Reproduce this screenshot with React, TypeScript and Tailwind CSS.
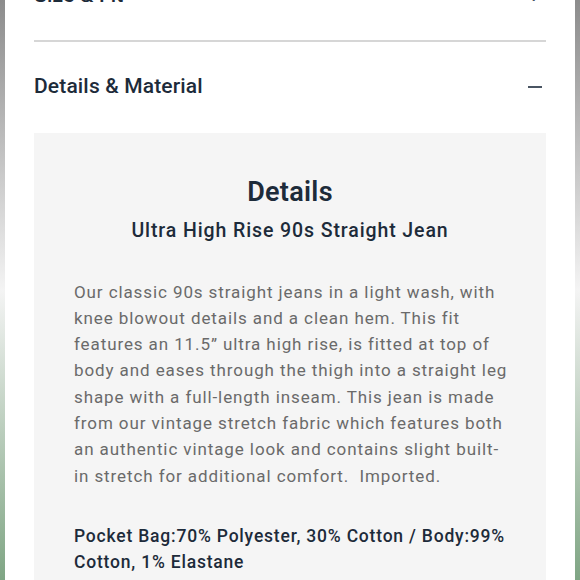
import React from "react";

const para = [
  "Our classic 90s straight jeans in a light wash, with",
  "knee blowout details and a clean hem. This fit",
  "features an 11.5” ultra high rise, is fitted at top of",
  "body and eases through the thigh into a straight leg",
  "shape with a full-length inseam. This jean is made",
  "from our vintage stretch fabric which features both",
  "an authentic vintage look and contains slight built-",
  "in stretch for additional comfort.\u00a0 Imported.",
];

const mat = ["Pocket Bag:70% Polyester, 30% Cotton / Body:99%", "Cotton, 1% Elastane"];

export default function App() {
  const font = { fontFamily: "Roboto, 'Liberation Sans', sans-serif" };
  return (
    <div className="w-[580px] h-[580px] overflow-hidden flex bg-white" style={font}>
      <div className="w-[5px] h-full shrink-0 bg-gradient-to-b from-[#8c8c8c] via-[#f4f4f4] to-[#7fa584]" />
      <div className="flex-1 h-full bg-white px-[29px] flex flex-col overflow-hidden">
        <div className="h-[40px] shrink-0 flex justify-between items-start">
          <div className="-mt-[17px] text-[21px] font-medium tracking-[0.2px] text-[#1d2b3a] leading-[24px]">
            Size &amp; Fit
          </div>
          <div className="-mt-[14px] mr-[6px] text-[22px] text-[#4a5563] leading-[20px]">+</div>
        </div>
        <div className="h-[1.5px] shrink-0 bg-[#d6d6d6]" />
        <div className="h-[91px] shrink-0 flex items-center justify-between pb-[3px]">
          <div className="text-[21px] font-medium tracking-[0.15px] text-[#1d2b3a] leading-[24px]">
            Details &amp; Material
          </div>
          <div className="w-[14px] h-[1.5px] bg-[#4a5563] mr-[4px] mt-[3px]" />
        </div>
        <div className="shrink-0 bg-[#f5f5f5] px-[40px] pt-[43px] pb-[40px]">
          <div className="text-center text-[27px] font-semibold text-[#1d2b3a] leading-[32px] tracking-[0.3px]">
            Details
          </div>
          <div className="mt-[11px] text-center text-[19.5px] font-medium text-[#1d2b3a] leading-[24px] tracking-[0.9px]">
            Ultra High Rise 90s Straight Jean
          </div>
          <p className="mt-[36px] text-[17px] leading-[26.3px] tracking-[0.9px] text-[#6a6a6a]">
            {para.map((l, i) => (
              <span key={i} className="block whitespace-nowrap">
                {l}
              </span>
            ))}
          </p>
          <p className="mt-[34px] text-[17.5px] leading-[26.3px] tracking-[0.8px] font-medium text-[#1d2b3a]">
            {mat.map((l, i) => (
              <span key={i} className="block whitespace-nowrap">
                {l}
              </span>
            ))}
          </p>
        </div>
      </div>
      <div className="w-[5px] h-full shrink-0 bg-gradient-to-b from-[#8c8c8c] via-[#f4f4f4] to-[#7fa584]" />
    </div>
  );
}
